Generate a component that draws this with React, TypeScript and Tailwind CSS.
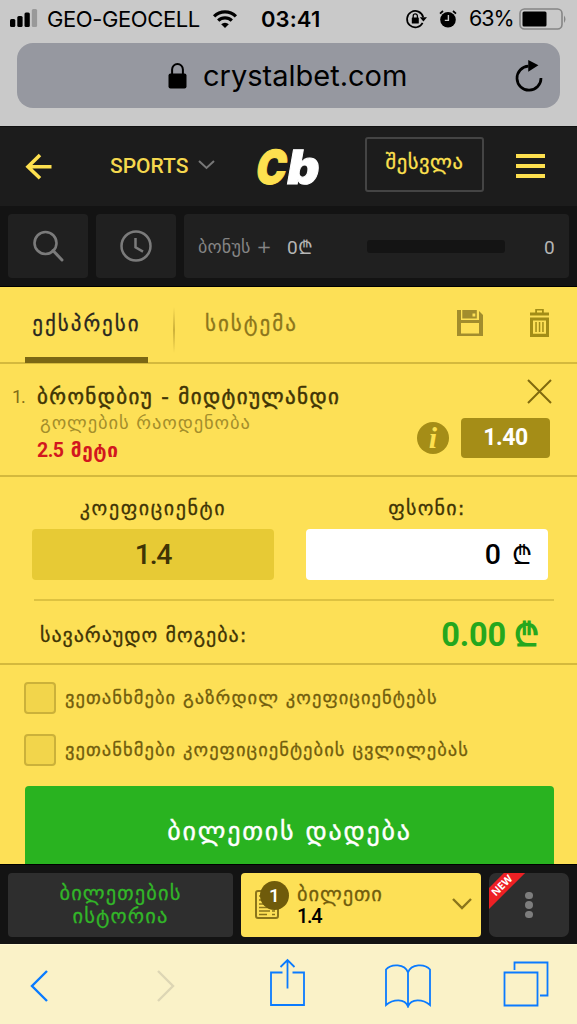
import type React from "react";

const geo = "font-['DejaVu_Sans',sans-serif] whitespace-nowrap";

const StatusBar: React.FC = () => (
  <div className="h-[38px] flex items-center pl-[10px] text-black font-['Inter',sans-serif] text-[22px] leading-none whitespace-nowrap">
    <svg width="28" height="20" viewBox="0 0 28 20">
      <rect x="0" y="10" width="5.3" height="8" rx="1.5" />
      <rect x="7.3" y="7" width="5.3" height="11" rx="1.5" />
      <rect x="14.5" y="3.5" width="5.3" height="14.5" rx="1.5" />
      <rect x="21.8" y="0" width="5.3" height="18" rx="1.5" fill="#999" />
    </svg>
    <span className="ml-[9px] w-[154px] tracking-[-0.4px]">GEO-GEOCELL</span>
    <svg className="ml-[11px]" width="26" height="20" viewBox="0 0 24 20" fill="none" stroke="#000" strokeWidth="3.2">
      <path d="M1.1 7.3a15.5 15.5 0 0 1 21.8 0" />
      <path d="M5.2 11.6a9.6 9.6 0 0 1 13.6 0" />
      <path d="M8.2 15.2a5.4 5.4 0 0 1 7.6 0L12 19z" fill="#000" stroke="none" />
    </svg>
    <span className="ml-[23px] w-[62px] font-semibold tracking-[0.1px]">03:41</span>
    <svg className="ml-[82px]" width="22" height="22" viewBox="0 0 22 22">
      <path d="M17.6 14.8a8.2 8.2 0 1 1 .6-5.6" fill="none" stroke="#000" strokeWidth="1.7" />
      <path d="M14.8 9.2H22l-3.6 4.3z" />
      <rect x="6.8" y="9.5" width="7" height="6" rx="0.6" />
      <path d="M8.2 10V8a2.1 2.1 0 0 1 4.2 0v2" fill="none" stroke="#000" strokeWidth="1.3" />
    </svg>
    <svg className="ml-[12px]" width="18" height="20" viewBox="0 0 18 20">
      <circle cx="9" cy="10.8" r="7.8" />
      <path d="M1 4.6 4 2M17 4.6 14 2" stroke="#000" strokeWidth="1.8" />
      <path d="M9.4 6v5.4H5.8" fill="none" stroke="#c9c9c9" strokeWidth="1.4" />
    </svg>
    <span className="ml-[12px] w-[44px] tracking-[-1px] text-[21.5px]">63%</span>
    <svg className="ml-[6px]" width="48" height="24" viewBox="0 0 48 24">
      <rect x="1" y="2" width="42" height="20" rx="4.5" fill="none" stroke="#858585" strokeWidth="1.6" />
      <rect x="3.5" y="4.5" width="24" height="15" rx="1.5" />
      <path d="M45 8.5q3 3.7 0 7.4z" fill="#858585" />
    </svg>
  </div>
);

const AddressBar: React.FC = () => (
  <div className="ml-[17px] mt-[5px] w-[543px] h-[65px] rounded-[16px] bg-[#9698a0] flex items-center">
    <svg className="ml-[151px]" width="19" height="26" viewBox="0 0 18 26">
      <rect x="0" y="10.5" width="18" height="15" rx="2" />
      <path d="M3.6 11.5V6.4a5.4 5.4 0 0 1 10.8 0v5.1" fill="none" stroke="#000" strokeWidth="2" />
    </svg>
    <span className="ml-[16px] w-[206px] text-[29px] leading-none text-black font-['Inter',sans-serif]">crystalbet.com</span>
    <svg className="ml-[105px]" width="30" height="37" viewBox="0 0 28 34">
      <path d="M13.5 8.3a11.2 11.2 0 1 0 11.7 11" fill="none" stroke="#000" strokeWidth="2.5" />
      <path d="M13.3 2.5v11l9.5-6z" />
    </svg>
  </div>
);

const Header: React.FC = () => (
  <header className="h-20 bg-[#1c1c1c] border-t border-[#111] flex items-center">
    <svg className="ml-[25px]" width="27" height="27" viewBox="0 0 27 27" fill="none" stroke="#fde04f" strokeWidth="3.6">
      <path d="M26.5 13.7H3M15 2 3 13.7 15 25.3" />
    </svg>
    <span className="ml-[58px] w-[80px] text-[21px] font-medium text-[#f5d84e] font-['Roboto',sans-serif]">SPORTS</span>
    <svg className="ml-[8px] mb-[3px]" width="17" height="10" viewBox="0 0 17 10" fill="none" stroke="#777" strokeWidth="2">
      <path d="m1 1 7.5 7L16 1" />
    </svg>
    <div className="ml-[42px] w-[70px] flex font-['Inter',sans-serif] font-black text-[47px] leading-none -skew-x-10">
      <span className="text-[#fde04f] w-[31px] origin-left scale-x-86 [-webkit-text-stroke:1px_#fde04f]">C</span>
      <span className="text-white origin-left scale-x-106 [-webkit-text-stroke:1px_#fff]">b</span>
    </div>
    <button className={`${geo} ml-[38px] mt-[-5px] w-[119px] h-[55px] rounded-[3px] border-2 border-[#444] pb-[3px] text-[20.5px] tracking-[0.6px] text-[#fde04f] [-webkit-text-stroke:0.3px_#fde04f]`}>
      შესვლა
    </button>
    <div className="ml-[32px] w-[29px] flex flex-col gap-[6px] pb-[2px]">
      <div className="h-1 bg-[#fde04f]" />
      <div className="h-1 bg-[#fde04f]" />
      <div className="h-1 bg-[#fde04f]" />
    </div>
  </header>
);

const BonusRow: React.FC = () => (
  <div className="h-[81px] bg-[#131313] px-2 pt-2 flex gap-2 border-b border-black">
    <div className="w-20 h-16 rounded-[4px] bg-[#202020] flex items-center justify-center">
      <svg width="32" height="32" viewBox="0 0 32 32" fill="none" stroke="#7b7b7b" strokeWidth="2.6">
        <circle cx="13.5" cy="13" r="11" />
        <path d="m21 20.5 9 9.5" strokeWidth="3" strokeLinecap="round" />
      </svg>
    </div>
    <div className="w-20 h-16 rounded-[4px] bg-[#202020] flex items-center justify-center">
      <svg width="32" height="32" viewBox="0 0 32 32" fill="none" stroke="#7b7b7b" strokeWidth="2.5">
        <circle cx="16" cy="16" r="14.5" />
        <path d="M15.5 8v9.3l7.5 4.3" />
      </svg>
    </div>
    <div className="w-[385px] h-16 rounded-[4px] bg-[#202020] flex items-center text-[19px] text-[#b5b5b5]">
      <span className={`${geo} ml-[14px] w-[75px] text-[18px] tracking-[0.2px] text-[#858585]`}>ბონუს +</span>
      <span className="ml-[14px] w-[26px] mt-1 font-['Roboto',sans-serif] whitespace-nowrap">0₾</span>
      <div className="ml-[54px] w-[138px] h-[13px] rounded-[3px] bg-[#141414]" />
      <span className="ml-[39px] mt-1 font-['Roboto',sans-serif]">0</span>
    </div>
  </div>
);

const Tabs: React.FC = () => (
  <div className="h-[77px] border-b-2 border-[#d4b93d] flex">
    <div className={`${geo} ml-[25px] w-[123px] h-[76px] border-b-[6px] border-[#7b6714] pt-[25px] text-center text-[21px] leading-[24px] tracking-[2px] text-[#29271f] [-webkit-text-stroke:0.3px_#29271f]`}>
      ექსპრესი
    </div>
    <div className="ml-[25px] mt-[20px] w-[2px] h-[46px] bg-linear-to-b from-transparent via-[#cdb13a] to-transparent" />
    <span className={`${geo} ml-[30px] w-[93px] pt-[25px] text-[21px] leading-[24px] tracking-[2px] text-[#8b751b] [-webkit-text-stroke:0.3px_#8b751b]`}>სისტემა</span>
    <svg className="ml-[159px] mt-[23px]" width="26" height="26" viewBox="0 0 26 26" fill="#a28d2d">
      <path fillRule="evenodd" d="M0 0h4v10h18V1l4 4v21H0zM4 13v10.5h18V13z" />
      <path fillRule="evenodd" d="M5.3 0h14.5v8.5H5.3zM15.5 3.5v3h2.8v-3z" />
    </svg>
    <svg className="ml-[47px] mt-[22px]" width="19" height="28" viewBox="0 0 19 28" fill="#a28d17">
      <path fillRule="evenodd" d="M0 3.5h5.2V0h8.6v3.5H19v3H0zM7 1.5v2h5v-2zM0 8.5h19V28H0zM3 11.5v13.2h13V11.5z" />
      <path d="M5.3 13h1.5v10H5.3zM8.8 13h1.5v10H8.8zM12.2 13h1.5v10h-1.5z" />
    </svg>
  </div>
);

const BetItem: React.FC = () => (
  <div className="h-[113px] border-b-2 border-[#d4b93d] flex">
    <span className="ml-[12px] w-[25px] pt-[21px] text-[18px] leading-[24px] tracking-[-1px] text-[#826d16] font-['Roboto',sans-serif]">1.</span>
    <div className={`${geo} w-[380px] pt-[20px] flex flex-col`}>
      <span className="text-[21px] leading-[26px] tracking-[1.4px] text-[#403405] [-webkit-text-stroke:0.5px_#403405]">ბრონდბიუ - მიდტიულანდი</span>
      <span className="ml-[3px] text-[18.5px] leading-[26px] tracking-[0.9px] text-[#a48e2b]">გოლების რაოდენობა</span>
      <span className="text-[19px] leading-[28px] font-bold tracking-[0.6px] text-[#d2171e]">
        <span className="font-['Roboto',sans-serif] text-[19.5px] tracking-[-0.5px]">2.5</span> მეტი
      </span>
    </div>
    <div className="w-[133px] pt-[15px] flex flex-col items-end">
      <svg className="mr-[-2px]" width="25" height="25" viewBox="0 0 25 25" fill="none" stroke="#80690e" strokeWidth="2">
        <path d="m1 1 23 23M24 1 1 24" />
      </svg>
      <div className="mt-[14px] flex items-center gap-3">
        <div className="size-[32px] rounded-full bg-[#a58d17] text-[#fde04f] text-center font-['Liberation_Serif',serif] font-bold italic text-[30px] leading-[31px]">i</div>
        <div className="w-[89px] h-[40px] rounded-[4px] bg-[#a58d17] text-white text-center text-[23px] leading-[40px] tracking-[-0.5px] font-bold font-['Roboto',sans-serif]">1.40</div>
      </div>
    </div>
  </div>
);

const Stake: React.FC = () => (
  <div className="h-[188px] border-b-2 border-[#d4b93d]">
    <div className={`${geo} ml-8 flex gap-8 text-center text-[20px] leading-[24px] text-[#403405] pt-[19px] [-webkit-text-stroke:0.3px_#403405]`}>
      <span className="w-[242px] tracking-[1.6px]">კოეფიციენტი</span>
      <span className="w-[242px] tracking-[1.2px]">ფსონი:</span>
    </div>
    <div className="ml-8 mt-[9px] flex gap-8 font-['Roboto',sans-serif] font-medium text-[28.5px] leading-[51px]">
      <div className="w-[242px] h-[51px] rounded-[4px] bg-[#e7ca35] text-center tracking-[-1.2px] text-[#403405]">1.4</div>
      <div className="w-[242px] h-[51px] rounded-[4px] bg-white text-right pr-[16px] text-black">
        0 <span className="ml-1 text-[26px]">₾</span>
      </div>
    </div>
    <div className="ml-[34px] mt-[19px] w-[520px] h-[2px] bg-[#ddc241]" />
    <div className="ml-[40px] w-[499px] pt-[14px] flex justify-between items-center">
      <span className={`${geo} text-[20px] tracking-[0.95px] text-[#403405] [-webkit-text-stroke:0.3px_#403405]`}>სავარაუდო მოგება:</span>
      <span className="font-['Roboto',sans-serif] font-bold text-[32.5px] leading-[40px] tracking-[-0.1px] text-[#25a71d]">0.00 ₾</span>
    </div>
  </div>
);

const Option: React.FC<{ label: string }> = ({ label }) => (
  <div className="flex items-center h-[32px]">
    <div className="w-[32px] h-[32px] rounded-[4px] border-2 border-[#cbb13a] bg-[#f2d54b]" />
    <span className={`${geo} ml-[9px] text-[18.5px] tracking-[1.05px] text-[#715d0d] [-webkit-text-stroke:0.3px_#715d0d]`}>{label}</span>
  </div>
);

const BetSlip: React.FC = () => (
  <main className="h-[577px] bg-[#fde056] overflow-hidden">
    <Tabs />
    <BetItem />
    <Stake />
    <div className="pl-[24px] pt-[17px] flex flex-col gap-[20px]">
      <Option label="ვეთანხმები გაზრდილ კოეფიციენტებს" />
      <Option label="ვეთანხმები კოეფიციენტების ცვლილებას" />
    </div>
    <button className={`${geo} ml-[25px] mt-[20px] w-[529px] h-[90px] rounded-[4px] bg-[#29b320] text-white text-[26px] tracking-[1.8px] [-webkit-text-stroke:0.4px_#fff]`}>
      ბილეთის დადება
    </button>
  </main>
);

const BottomBar: React.FC = () => (
  <div className="h-20 bg-[#131313] border-t border-black px-2 pt-2 flex gap-2">
    <div className={`${geo} w-[225px] h-16 rounded-[4px] bg-[#2e2e2e] pt-[9px] flex flex-col items-center text-[20.5px] leading-[23px] tracking-[1.1px] text-[#32b628] [-webkit-text-stroke:0.3px_#32b628]`}>
      <span>ბილეთების</span>
      <span>ისტორია</span>
    </div>
    <div className="w-[240px] h-16 rounded-[4px] bg-[#fde056] flex relative">
      <svg className="ml-[14px] mt-[17px]" width="25" height="29" viewBox="0 0 25 29" fill="none" stroke="#8b751b" strokeWidth="2">
        <rect x="1" y="1" width="22" height="27" rx="2" />
        <path d="M4 6h8M4 10h8M4 14h10M4 17.5h12M4 21h11M4 24.5h8M17 21h3M17 24.5h3" strokeWidth="1.5" />
      </svg>
      <div className="absolute left-[19px] top-[8px] size-[29px] rounded-full bg-[#6f5b0b] text-white text-center text-[19px] leading-[29px] font-medium font-['Roboto',sans-serif]">1</div>
      <div className="ml-[17px] w-[86px] pt-[9px] flex flex-col">
        <span className={`${geo} text-[20.5px] leading-[24px] tracking-[0.9px] text-[#715d0d] [-webkit-text-stroke:0.3px_#715d0d]`}>ბილეთი</span>
        <span className="text-[20px] leading-[21px] tracking-[-1.3px] font-medium text-black font-['Roboto',sans-serif]">1.4</span>
      </div>
      <svg className="ml-[69px] mt-[25px]" width="20" height="12" viewBox="0 0 20 12" fill="none" stroke="#8b751b" strokeWidth="2.4">
        <path d="m1 1 9 9 9-9" />
      </svg>
    </div>
    <div className="w-20 h-16 rounded-[7px] bg-[#2e2e2e] relative overflow-hidden flex flex-col items-center justify-center gap-[2px]">
      <div className="absolute left-[-19px] top-[5px] w-[64px] h-[15px] bg-[#ed2024] -rotate-45 text-white text-center text-[10.5px] leading-[15px] font-bold font-['Open_Sans',sans-serif]">NEW</div>
      <div className="size-[7.5px] rounded-full bg-[#7d7d7d]" />
      <div className="size-[7.5px] rounded-full bg-[#7d7d7d]" />
      <div className="size-[7.5px] rounded-full bg-[#7d7d7d]" />
    </div>
  </div>
);

const SafariToolbar: React.FC = () => (
  <div className="h-20 bg-[#faf2c8] border-t border-[#fff9d6] flex">
    <svg className="ml-[30px] mt-[25px]" width="18" height="32" viewBox="0 0 18 32" fill="none" stroke="#0a7bff" strokeWidth="2.4">
      <path d="M17 1 2 16l15 15" />
    </svg>
    <svg className="ml-[109px] mt-[25px]" width="18" height="32" viewBox="0 0 18 32" fill="none" stroke="#ddd6b4" strokeWidth="2.4">
      <path d="m1 1 15 15L1 31" />
    </svg>
    <svg className="ml-[95px] mt-[13px]" width="36" height="50" viewBox="0 0 36 50" fill="none" stroke="#0a7bff" strokeWidth="1.8">
      <path d="M12.5 14.5H1V47h33V14.5H22.5M17.5 30.5V2M10.5 9l7-7 7 7" />
    </svg>
    <svg className="ml-[79px] mt-[19px]" width="46" height="44" viewBox="0 0 46 44" fill="none" stroke="#0a7bff" strokeWidth="1.8">
      <path d="M23 8.5C20-.5 6-.5 1 5.500V41c7-6 19-7 22 1.500C26 34 38 35 45 41V5.500C40-.5 26-.5 23 8.500zV42" />
    </svg>
    <svg className="ml-[72px] mt-[16px]" width="46" height="46" viewBox="0 0 46 46" fill="none" stroke="#0a7bff" strokeWidth="1.8">
      <path d="M1.5 11.5h33v33h-33zM11.5 9V1.5h33v33H37" />
    </svg>
  </div>
);

export default function App() {
  return (
    <div className="w-[577px] h-[1024px] overflow-hidden bg-[#c9c9c9]">
      <div className="h-[126px]">
        <StatusBar />
        <AddressBar />
      </div>
      <Header />
      <BonusRow />
      <BetSlip />
      <BottomBar />
      <SafariToolbar />
    </div>
  );
}
